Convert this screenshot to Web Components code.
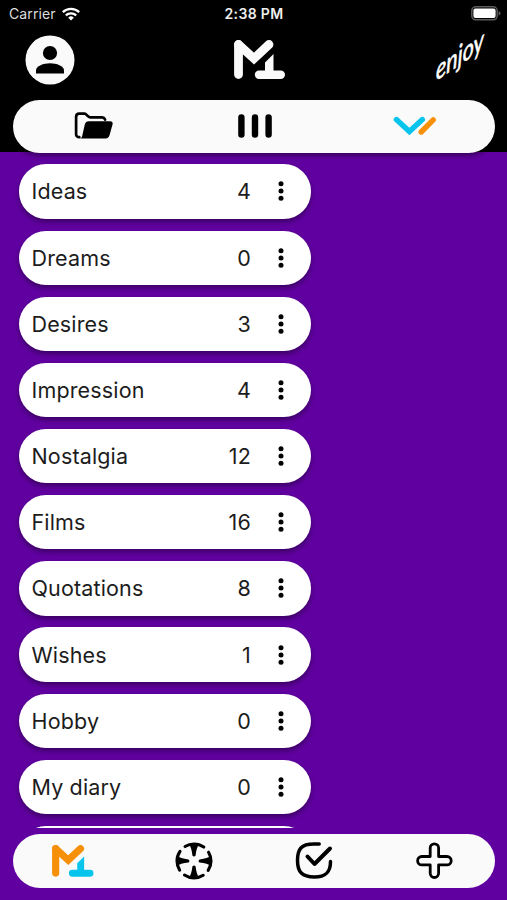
<!DOCTYPE html>
<html lang="en">
<head>
<meta charset="utf-8">
<meta name="viewport" content="width=device-width, initial-scale=1">
<title>Lists</title>
<style>
html, body {
  margin: 0;
  height: 100%;
  overflow: hidden;
  background: #6000a0;
  font-family: Inter, "Liberation Sans", sans-serif;
}
</style>
</head>
<body>
<lists-screen></lists-screen>

<script>
const LISTS = [
  { label: "Ideas", count: 4 },
  { label: "Dreams", count: 0 },
  { label: "Desires", count: 3 },
  { label: "Impression", count: 4 },
  { label: "Nostalgia", count: 12 },
  { label: "Films", count: 16 },
  { label: "Quotations", count: 8 },
  { label: "Wishes", count: 1 },
  { label: "Hobby", count: 0 },
  { label: "My diary", count: 0 },
  { label: "", count: "" }
];

const ICONS = {
  wifi: `<svg width="18" height="14" viewBox="0 0 18 14" fill="none" stroke="#fff" stroke-width="2.3">
    <path d="M.8 5.2a11.8 11.8 0 0 1 16.4 0M3.8 8.4a7.6 7.6 0 0 1 10.4 0"/>
    <path d="M9 13.6 6.2 10.7a4 4 0 0 1 5.6 0z" fill="#fff" stroke="none"/></svg>`,
  battery: `<svg width="31" height="15" viewBox="0 0 31 15">
    <rect x=".8" y=".8" width="25.4" height="13" rx="4" fill="none" stroke="#5c5c5c" stroke-width="1.5"/>
    <rect x="2.4" y="2.6" width="22.2" height="9.4" rx="2" fill="#fff"/>
    <path d="M27.6 5c2.6.8 2.6 3.8 0 4.6z" fill="#5c5c5c"/></svg>`,
  user: `<svg width="50" height="50" viewBox="0 0 50 50">
    <circle cx="25" cy="25" r="24.5" fill="#fafafa"/>
    <circle cx="25" cy="18" r="7.1"/>
    <path d="M11 38.5v-3.2c0-4.2 7.5-7 14-7s14 2.8 14 7v3.2z"/></svg>`,
  folder: `<svg width="40" height="28" viewBox="0 0 40 28">
    <path d="M6.3 25.2c-2 0-3.2-1.2-3.2-3.3V5c0-2 1.2-3.3 3.2-3.3h5.2c2.2 0 3 3.6 5.7 3.6h11.2c1.9 0 3.2.8 3.7 2.4" fill="none" stroke="#000" stroke-width="2.7" stroke-linecap="round"/>
    <path d="M16 9.2h21c2 0 3 1.2 2.6 3l-3 10.8c-.7 2.4-1.8 3.4-4 3.4H7.2c1.2-.4 1.7-1.4 2-2.5l2.6-11.4c.5-2.1 1.8-3.3 4.2-3.3z"/></svg>`,
  columns: `<svg width="36" height="26" viewBox="0 0 36 26" stroke="#000" stroke-width="6.4" stroke-linecap="round">
    <path d="M5.4 4.5v17M19 4.5v17M32.6 4.5v17"/></svg>`,
  checks: `<svg width="44" height="20" viewBox="0 0 44 20" fill="none" stroke-width="5.4" stroke-linecap="round">
    <path d="M4.4 3.6 17.4 15.5 30.3 3.6" stroke="#06c4ec"/>
    <path d="M29.2 16 41.2 3.8" stroke="#f79009"/></svg>`,
  target: `<svg width="40" height="40" viewBox="0 0 40 40">
    <circle cx="20" cy="20" r="17" fill="none" stroke="#000" stroke-width="3.1" stroke-linecap="round" stroke-dasharray="19.8 6.9" stroke-dashoffset="9.9"/>
    <path id="ray" d="M14.8 3.2q5.2-1 10.4 0-2.7 3-3.6 11.2-1.6 2-3.2 0-.9-8.2-3.6-11.2z"/>
    <use href="#ray" transform="rotate(90 20 20)"/>
    <use href="#ray" transform="rotate(180 20 20)"/>
    <use href="#ray" transform="rotate(270 20 20)"/></svg>`,
  done: `<svg width="40" height="40" viewBox="0 0 40 40" fill="none" stroke="#000" stroke-width="3.5" stroke-linecap="round" stroke-linejoin="round">
    <path d="M25.2 3H20C7 3 3.5 8 3.5 19.5S8 36 20.5 36c11 0 16-4.2 16-15.5"/>
    <path d="M13.5 15.5 20.5 23 36 7.5" stroke-width="4"/></svg>`,
  plus: `<svg width="40" height="40" viewBox="0 0 40 40" fill="none" stroke="#000" stroke-width="2.8" stroke-linejoin="round">
    <path d="M16.2 15.5V7a4.2 4.2 0 0 1 8.4 0v8.5H33a4.2 4.2 0 0 1 0 8.4h-8.4v8.4a4.2 4.2 0 0 1-8.4 0v-8.4H7.8a4.2 4.2 0 0 1 0-8.4z"/></svg>`,
  dots: `<svg width="6" height="20" viewBox="0 0 6 20">
    <circle cx="3" cy="2.7" r="2.5"/><circle cx="3" cy="10" r="2.5"/><circle cx="3" cy="17.3" r="2.5"/></svg>`
};

class UiIcon extends HTMLElement {
  constructor() {
    super();
    this.attachShadow({ mode: "open" });
  }
  connectedCallback() {
    this.shadowRoot.innerHTML = `
      <style>
        :host { display: inline-flex; flex-shrink: 0; }
        svg { display: block; }
      </style>${ICONS[this.getAttribute("name")] || ""}`;
  }
}

// Brand mark, recoloured through --mark-m and --mark-one
class BrandMark extends HTMLElement {
  constructor() {
    super();
    this.attachShadow({ mode: "open" }).innerHTML = `
      <style>
        :host { display: block; width: 51px; }
        svg { display: block; width: 100%; }
        .m { fill: none; stroke: var(--mark-m, #fafafa); stroke-width: 8.8; stroke-linecap: round; }
        .one { fill: var(--mark-one, #fafafa); }
      </style>
      <svg viewBox="0 0 51 39">
        <path class="m" d="M4.5 34.5V4.5"/>
        <path class="m" d="M4.5 4.5 20 18.6 35 4.5"/>
        <path class="one" d="M31 30.5V22.5l8.5-8.5v16.5h7.3a4.2 4.2 0 0 1 0 8.4H25a4.2 4.2 0 0 1 0-8.4z"/>
      </svg>`;
  }
}

class StatusBar extends HTMLElement {
  constructor() {
    super();
    this.attachShadow({ mode: "open" }).innerHTML = `
      <style>
        :host {
          display: grid;
          grid-template-columns: 1fr auto 1fr;
          align-items: center;
          height: 27px;
          padding: 0 5px 0 9px;
          color: #fff;
          font-size: 14px;
          line-height: 27px;
        }
        .left { display: flex; align-items: center; gap: 6px; color: #ddd; letter-spacing: .1px; }
        .time { margin-right: 3px; font-weight: 600; color: #eee; letter-spacing: .35px; }
        .right { display: flex; justify-content: flex-end; }
      </style>
      <div class="left"><span>Carrier</span><ui-icon name="wifi"></ui-icon></div>
      <div class="time">2:38 PM</div>
      <div class="right"><ui-icon name="battery"></ui-icon></div>`;
  }
}

class AppHeader extends HTMLElement {
  constructor() {
    super();
    this.attachShadow({ mode: "open" }).innerHTML = `
      <style>
        :host {
          display: grid;
          grid-template-columns: 1fr auto 1fr;
          align-items: center;
          height: 65px;
          padding: 0 11px 8px 25px;
        }
        brand-mark { margin-right: 2px; }
        .slogan { justify-self: end; display: block; overflow: visible; }
        text { font: italic 400 28px Lato, "Open Sans", sans-serif; fill: #fff; stroke: #fff; stroke-width: .6; }
      </style>
      <ui-icon name="user"></ui-icon>
      <brand-mark></brand-mark>
      <svg class="slogan" width="64" height="60" viewBox="0 0 64 60">
        <text transform="translate(4 51) skewY(-34) scale(.77 1)">enjoy</text>
      </svg>`;
  }
}

class PillBar extends HTMLElement {
  constructor() {
    super();
    this.attachShadow({ mode: "open" }).innerHTML = `
      <style>
        :host {
          display: grid;
          grid-auto-flow: column;
          grid-auto-columns: 1fr;
          align-items: center;
          justify-items: center;
          box-sizing: border-box;
          margin: 0 12.5px 0 13px;
          border-radius: 27px;
          background: #fafafa;
        }
      </style>
      <slot></slot>`;
  }
}

class ListCard extends HTMLElement {
  constructor() {
    super();
    this.attachShadow({ mode: "open" }).innerHTML = `
      <style>
        :host {
          display: flex;
          align-items: center;
          flex-shrink: 0;
          box-sizing: border-box;
          width: 292px;
          height: 54.2px;
          padding: 0 27px 0 12.5px;
          border-radius: 27.1px;
          background: #fff;
          box-shadow: 0 3px 5px rgba(0, 0, 0, .38);
          color: #1c1c1c;
          font-size: 21.5px;
          letter-spacing: .15px;
        }
        .label { flex: 1; }
        ui-icon { margin-left: 27px; }
      </style>
      <span class="label"><slot></slot></span>
      <slot name="count"></slot>
      <ui-icon name="dots"></ui-icon>`;
  }
}

class ListsScreen extends HTMLElement {
  constructor() {
    super();
    const cards = LISTS.map((l) =>
      `<list-card>${l.label}<span slot="count">${l.count}</span></list-card>`).join("");
    this.attachShadow({ mode: "open" }).innerHTML = `
      <style>
        :host { display: flex; flex-direction: column; height: 100vh; background: #6000a0; }
        .top { flex-shrink: 0; height: 152px; background: #000; }
        .tabs { height: 52.5px; position: relative; box-shadow: 0 3px 5px rgba(0, 0, 0, .4); }
        .list {
          flex: 1;
          min-height: 0;
          display: flex;
          flex-direction: column;
          gap: 11.97px;
          padding: 12.4px 0 0 19px;
          overflow: hidden;
        }
        .nav { flex-shrink: 0; height: 54px; margin-top: 6px; margin-bottom: 12px; }
        .nav brand-mark { width: 41.5px; --mark-m: #f79009; --mark-one: #06c4ec; }
      </style>
      <div class="top">
        <status-bar></status-bar>
        <app-header></app-header>
        <pill-bar class="tabs">
          <ui-icon name="folder"></ui-icon>
          <ui-icon name="columns"></ui-icon>
          <ui-icon name="checks"></ui-icon>
        </pill-bar>
      </div>
      <div class="list">${cards}</div>
      <pill-bar class="nav">
        <brand-mark></brand-mark>
        <ui-icon name="target"></ui-icon>
        <ui-icon name="done"></ui-icon>
        <ui-icon name="plus"></ui-icon>
      </pill-bar>`;
  }
}

customElements.define("ui-icon", UiIcon);
customElements.define("brand-mark", BrandMark);
customElements.define("status-bar", StatusBar);
customElements.define("app-header", AppHeader);
customElements.define("pill-bar", PillBar);
customElements.define("list-card", ListCard);
customElements.define("lists-screen", ListsScreen);
</script>
</body>
</html>
